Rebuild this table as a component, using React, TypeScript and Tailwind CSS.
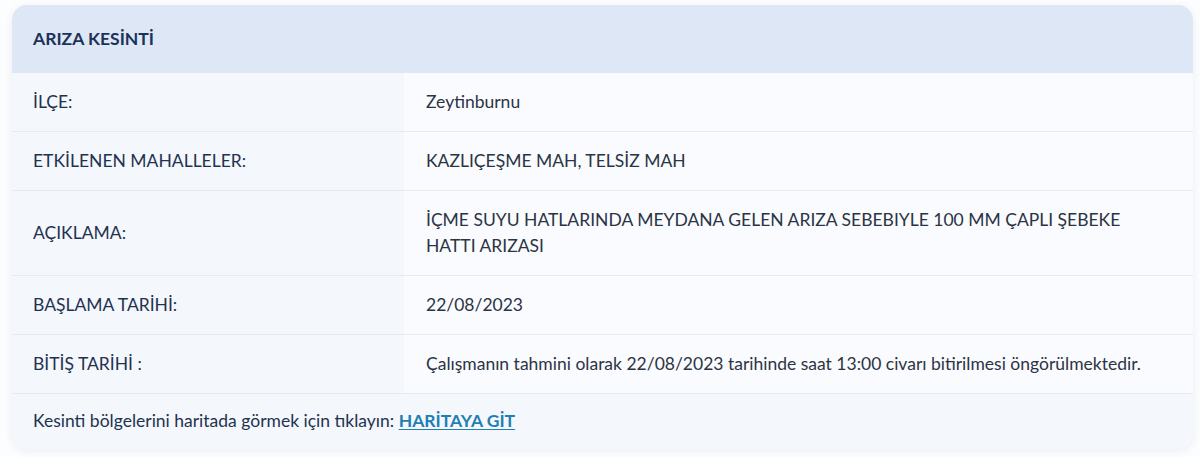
const rows: { label: string; value: string }[] = [
  { label: 'İLÇE:', value: 'Zeytinburnu' },
  { label: 'ETKİLENEN MAHALLELER:', value: 'KAZLIÇEŞME MAH, TELSİZ MAH' },
  {
    label: 'AÇIKLAMA:',
    value: 'İÇME SUYU HATLARINDA MEYDANA GELEN ARIZA SEBEBIYLE 100 MM ÇAPLI ŞEBEKE HATTI ARIZASI',
  },
  { label: 'BAŞLAMA TARİHİ:', value: '22/08/2023' },
  {
    label: 'BİTİŞ TARİHİ :',
    value: 'Çalışmanın tahmini olarak 22/08/2023 tarihinde saat 13:00 civarı bitirilmesi öngörülmektedir.',
  },
];

export default function App() {
  return (
    <div className="min-h-screen w-full bg-[#fcfdfe] px-3 pt-[5px] font-['Lato',sans-serif]">
      <div className="w-[1181px] overflow-hidden rounded-[15px] bg-[#f4f7fc] shadow-[0_2px_8px_rgba(30,50,90,0.08)]">
        {/* header */}
        <div className="flex h-[68px] items-center bg-[#dde7f6] px-[21px]">
          <span className="text-[17.5px] font-bold text-[#1b3358]">ARIZA KESİNTİ</span>
        </div>

        {rows.map((r) => (
          <div key={r.label} className="grid grid-cols-[392px_1fr] border-b border-[#e6eaf1]">
            <div className="flex items-center bg-[#f4f7fc] px-[21px] py-4 text-[17.5px] leading-[26px] text-[#1f3350]">
              {r.label}
            </div>
            <div className="flex items-center bg-[#fafbfe] pl-[22px] pr-[26px] py-4 text-[17.5px] leading-[26px] text-[#2b3444]">
              {r.value}
            </div>
          </div>
        ))}

        {/* footer */}
        <div className="flex h-[55px] items-center px-[21px] text-[17.5px] text-[#1f3350]">
          <span>Kesinti bölgelerini haritada görmek için tıklayın:&nbsp;</span>
          <a href="#" className="font-bold text-[#1f7fb3] underline underline-offset-2">
            HARİTAYA GİT
          </a>
        </div>
      </div>
    </div>
  );
}
